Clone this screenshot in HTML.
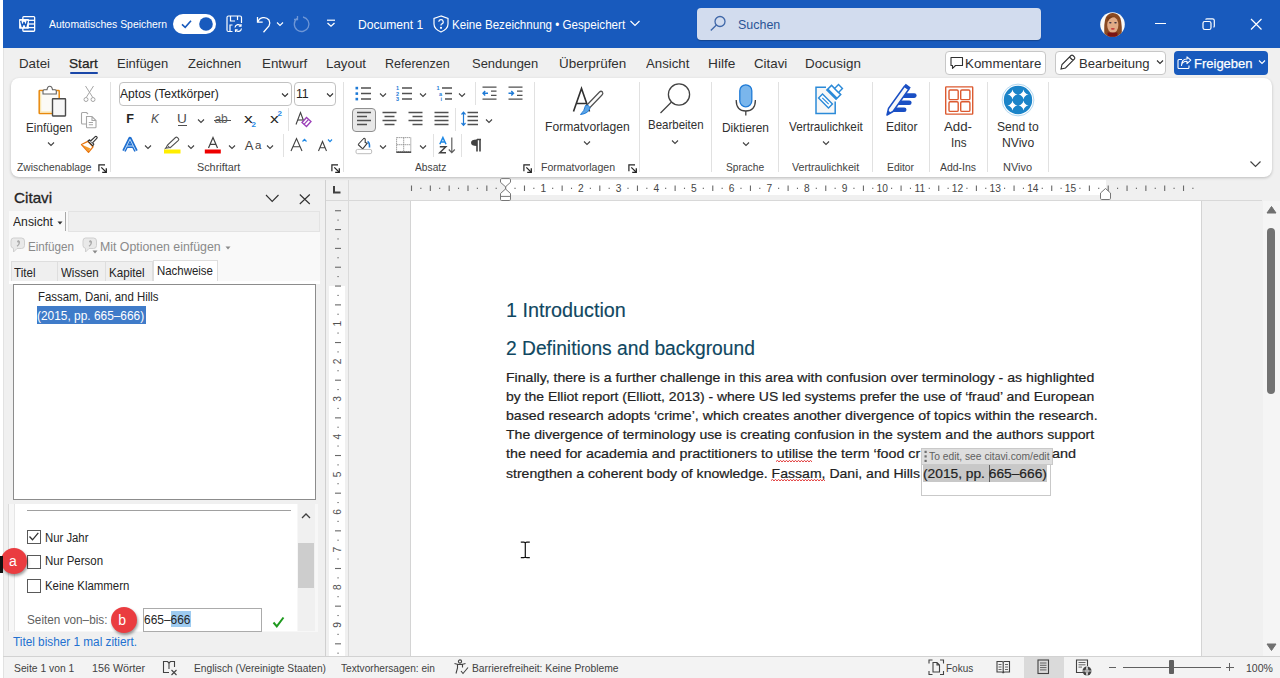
<!DOCTYPE html>
<html><head><meta charset="utf-8">
<style>
*{box-sizing:border-box;margin:0;padding:0}
html,body{width:1280px;height:678px;overflow:hidden;background:#f0f0f0;font-family:"Liberation Sans",sans-serif;color:#242424;position:relative}
.a{position:absolute;white-space:nowrap}
.t{position:absolute;white-space:nowrap;line-height:1}
svg{position:absolute;overflow:visible}
</style></head><body>

<div class="a" style="left:0;top:0;width:3px;height:678px;background:#fff"></div>
<div class="a" style="left:3px;top:48px;width:1px;height:630px;background:#e2e2e2"></div>
<div class="a" style="left:3px;top:0;width:1277px;height:48px;background:#185abd"></div>
<div class="a" style="left:11px;top:78px;width:1261px;height:99px;background:#fff;border-radius:8px;box-shadow:0 1px 3px rgba(0,0,0,.22)"></div>
<svg style="left:19px;top:16px" width="17" height="17" viewBox="0 0 17 17" fill="none" stroke="#fff" stroke-width="1.3">
<rect x="3.85" y="0.55" width="11.8" height="14.7" rx="0.9"/>
<line x1="8" y1="4.3" x2="15.6" y2="4.3"/><line x1="8" y1="8" x2="15.6" y2="8"/><line x1="8" y1="11.6" x2="15.6" y2="11.6"/>
<rect x="0.1" y="2.9" width="9.8" height="9.8" rx="0.7" fill="#fff" stroke="none"/>
<path d="M1.7 4.8 L3.2 10.6 L5 6.3 L6.8 10.6 L8.3 4.8" stroke="#185abd" stroke-width="1.4" stroke-linejoin="round"/>
</svg>
<div class="a" style="left:173px;top:14px;width:43px;height:20px;border-radius:10px;background:#fff"></div>
<svg style="left:173px;top:14px" width="43" height="20"><path d="M9 10.3 L12.2 13.3 L18 6.8" stroke="#185abd" stroke-width="1.6" fill="none"/><circle cx="33" cy="10" r="6.8" fill="#185abd"/></svg>
<svg style="left:226px;top:15px" width="18" height="18" viewBox="0 0 18 18" fill="none" stroke="#fff" stroke-width="1.2">
<path d="M6.5 16.5 H2.5 Q1 16.5 1 15 V2.5 Q1 1 2.5 1 H14 Q15.5 1 15.5 2.5 V8"/><path d="M4.5 1 V6 H9"/><path d="M11.5 1 V5"/><path d="M4 16.5 V10 H6.5"/>
<path d="M9 12.5 A3.3 3.3 0 0 1 15 11"/><path d="M15.5 13.5 A3.3 3.3 0 0 1 9.5 15"/><path d="M15 9 V11.2 H12.8"/><path d="M9.5 17 V14.8 H11.7"/>
</svg>
<svg style="left:255px;top:15px" width="20" height="18" viewBox="0 0 20 18" fill="none" stroke="#fff" stroke-width="1.3">
<path d="M2.5 2 V7.2 H7.7"/><path d="M2.8 7 A6.5 6.5 0 0 1 14 5 A6.5 6.5 0 0 1 14 11 L8.5 17.2"/></svg>
<svg style="left:276px;top:21px" width="8" height="6"><path d="M1 1.5 L4 4.5 L7 1.5" stroke="#fff" stroke-width="1.1" fill="none"/></svg>
<svg style="left:292px;top:15px" width="20" height="18" viewBox="0 0 20 18" fill="none" stroke="#6e96d6" stroke-width="1.3">
<path d="M11 2 A7.3 7.3 0 1 1 5 3.5"/><path d="M5.5 1 V4.5 H2"/></svg>
<svg style="left:326px;top:19px" width="10" height="9"><path d="M1 1.2 H9" stroke="#fff" stroke-width="1.2"/><path d="M1.5 4 L5 7.2 L8.5 4" stroke="#fff" stroke-width="1.3" fill="none"/></svg>
<svg style="left:432px;top:15px" width="18" height="18" viewBox="0 0 18 18" fill="none" stroke="#fff" stroke-width="1.2">
<path d="M9 1 L2 3.5 V9 Q2 14 9 17 Q16 14 16 9 V3.5 Z"/><path d="M6.8 6.8 A2.2 2.2 0 1 1 9.5 9 Q9 9.3 9 10.5"/><circle cx="9" cy="12.8" r="0.5" fill="#fff"/></svg>
<svg style="left:629px;top:19px" width="12" height="9"><path d="M1.5 2 L6 6.5 L10.5 2" stroke="#fff" stroke-width="1.2" fill="none"/></svg>
<div class="a" style="left:697px;top:8px;width:344px;height:32px;border-radius:4px;background:#d2dcee;box-shadow:0 1px 1px rgba(0,0,0,.25)"></div>
<svg style="left:709px;top:15px" width="18" height="18" viewBox="0 0 18 18" fill="none" stroke="#3f67a8" stroke-width="1.3"><circle cx="11" cy="6.5" r="5"/><path d="M7.4 10 L1.8 15.5"/></svg>
<svg style="left:1100px;top:11.5px" width="25" height="25"><defs><clipPath id="av"><circle cx="12.5" cy="12.5" r="12.3"/></clipPath></defs>
<g clip-path="url(#av)"><rect width="25" height="25" fill="#fbfaf6"/>
<path d="M4.5 25 Q3.5 10 6 5 Q9 0.8 13 1 Q18.5 1.2 20.5 6.5 Q22.5 14 21.5 25 Z" fill="#8a4a22"/>
<ellipse cx="12.8" cy="13" rx="5.6" ry="8" fill="#e2ab86"/>
<path d="M7 5 Q12 3 18.5 6 Q15 4.5 12 5.5 Q9 6.5 7.5 10 Z" fill="#7a3e1a"/>
<ellipse cx="10.3" cy="10.8" rx="1.3" ry="0.8" fill="#3a3040"/><ellipse cx="15.5" cy="10.8" rx="1.3" ry="0.8" fill="#3a3040"/>
<ellipse cx="12.8" cy="16.8" rx="2" ry="0.9" fill="#c83a3a"/>
<rect x="7.5" y="20.5" width="10" height="5" fill="#7a1414"/></g></svg>
<div class="a" style="left:1155px;top:23px;width:11px;height:1.3px;background:#fff"></div>
<svg style="left:1202px;top:18px" width="14" height="12" fill="none" stroke="#fff" stroke-width="1.2"><rect x="1" y="3.5" width="8" height="8" rx="1.8"/><path d="M3.5 1.5 Q4 0.8 5 0.8 H10.5 Q12.3 0.8 12.3 2.5 V8 Q12.3 9 11.5 9.3"/></svg>
<svg style="left:1250px;top:18px" width="13" height="13"><path d="M1 1 L11.5 11.5 M11.5 1 L1 11.5" stroke="#fff" stroke-width="1.2"/></svg>
<div class="a" style="left:70px;top:72.4px;width:28px;height:2px;border-radius:1px;background:#1a47a8"></div>
<div class="a" style="left:945px;top:50.5px;width:101px;height:24px;border:1px solid #c7c7c7;border-radius:4px;background:#fff"></div>
<svg style="left:950px;top:56px" width="14" height="14" fill="none" stroke="#303030" stroke-width="1.1"><path d="M1 1.5 H12.5 V9.5 H5.5 L2.5 12.3 V9.5 H1 Z" stroke-linejoin="round"/></svg>
<div class="a" style="left:1054.5px;top:50.5px;width:111px;height:24px;border:1px solid #c7c7c7;border-radius:4px;background:#fff"></div>
<svg style="left:1059px;top:54px" width="17" height="17" fill="none" stroke="#303030" stroke-width="1.1"><path d="M2 15 L3 10.5 L12 1.5 Q13 0.8 14 1.5 L15.5 3 Q16.2 4 15.5 5 L6.5 14 Z M10.5 3 L14 6.5"/></svg>
<svg style="left:1156px;top:59px" width="8" height="6"><path d="M1 1.5 L4 4.5 L7 1.5" stroke="#303030" stroke-width="1.1" fill="none"/></svg>
<div class="a" style="left:1174px;top:50.5px;width:94px;height:24px;border-radius:4px;background:#185abd"></div>
<svg style="left:1177px;top:56px" width="16" height="14" fill="none" stroke="#fff" stroke-width="1.1"><path d="M5 3.5 H2 Q1 3.5 1 4.5 V11.5 Q1 12.5 2 12.5 H11 Q12 12.5 12 11.5 V9.5" stroke-linejoin="round"/><path d="M4.5 9.5 Q5 5.3 10 5.3 V7.6 L13.8 4.2 L10 0.8 V3 Q4.5 3 4.5 9.5 Z" stroke-linejoin="round"/></svg>
<svg style="left:1258px;top:59px" width="8" height="6"><path d="M1 1.5 L4 4.5 L7 1.5" stroke="#fff" stroke-width="1.1" fill="none"/></svg>
<div class="a" style="left:110px;top:82px;width:1px;height:90px;background:#e1e1e1"></div>
<div class="a" style="left:343px;top:82px;width:1px;height:90px;background:#e1e1e1"></div>
<div class="a" style="left:534px;top:82px;width:1px;height:90px;background:#e1e1e1"></div>
<div class="a" style="left:639px;top:82px;width:1px;height:90px;background:#e1e1e1"></div>
<div class="a" style="left:711px;top:82px;width:1px;height:90px;background:#e1e1e1"></div>
<div class="a" style="left:778px;top:82px;width:1px;height:90px;background:#e1e1e1"></div>
<div class="a" style="left:872px;top:82px;width:1px;height:90px;background:#e1e1e1"></div>
<div class="a" style="left:929px;top:82px;width:1px;height:90px;background:#e1e1e1"></div>
<div class="a" style="left:987px;top:82px;width:1px;height:90px;background:#e1e1e1"></div>
<div class="a" style="left:1048px;top:82px;width:1px;height:90px;background:#e1e1e1"></div>
<svg style="left:37px;top:85px" width="32" height="33" fill="none">
<rect x="2.2" y="5.5" width="20" height="23" rx="0.6" fill="#fbfaf6" stroke="#e8890c" stroke-width="1.5"/><path d="M3.7 7 V27 H15" stroke="#fbe3a0" stroke-width="1"/>
<path d="M6 9 V6 Q6 4.8 7.3 4.8 H10 Q10.5 1.2 12.8 1.2 Q15 1.2 15.5 4.8 H18 Q19.3 4.8 19.3 6 V9 Z" fill="#fff" stroke="#616161" stroke-width="1.1"/>
<rect x="15.5" y="13.8" width="13" height="17.2" rx="0.4" fill="#f7f7f7" stroke="#4a4a4a" stroke-width="1.4"/>
</svg>
<svg style="left:47px;top:141px" width="8" height="6"><path d="M1 1.5 L4.0 4.5 L7 1.5" stroke="#424242" stroke-width="1.1" fill="none"/></svg>
<svg style="left:83px;top:85px" width="13" height="18" fill="none" stroke="#a6a6a6" stroke-width="1"><path d="M2.5 1 L9.5 12 M10.5 1 L3.5 12"/><circle cx="3" cy="14.5" r="2"/><circle cx="10" cy="14.5" r="2"/></svg>
<svg style="left:80px;top:111px" width="18" height="18" fill="none" stroke="#a6a6a6" stroke-width="1.1"><path d="M6 13 H2.5 Q1.5 13 1.5 12 V2.5 Q1.5 1.5 2.5 1.5 H6.5 L8 3"/><path d="M6.5 5.5 H12 L16 9.5 V16 Q16 16.8 15.2 16.8 H7.3 Q6.5 16.8 6.5 16 Z M12 5.5 V9.5 H16 M8.8 11.5 H13 M8.8 13.8 H13"/></svg>
<svg style="left:76px;top:130px" width="26" height="28" fill="none">
<path d="M5.5 14.5 L11.8 11.3 L17 16.8 L12.5 22.3 Z" fill="#fff" stroke="#e8740c" stroke-width="1.3" stroke-linejoin="round"/>
<path d="M6.5 15 L14.5 18.5 L12.3 21.5 Z" fill="#f59a2a"/>
<path d="M12 11 L13.6 9.8 L17.8 14.2 L16.8 15.8 Z" fill="#fff" stroke="#333" stroke-width="1.1" stroke-linejoin="round"/>
<path d="M14.6 11 L19 6.8 Q20 6 20.8 6.8 Q21.6 7.6 20.8 8.4 L16.5 12.8" fill="#fff" stroke="#333" stroke-width="1.1"/>
</svg>
<svg style="left:98px;top:164px" width="10" height="10" fill="none" stroke="#242424" stroke-width="1.2"><path d="M0.9 7.2 V0.9 H7"/><path d="M3.3 3.3 L8 8"/><path d="M4.2 8.3 H8.3 V4.2" stroke-width="1.3"/></svg>
<div class="a" style="left:118.5px;top:82px;width:173px;height:24px;border:1px solid #c2c2c2;border-radius:4px;background:#fff"></div>
<svg style="left:281px;top:92px" width="8" height="6"><path d="M1 1.5 L4.0 4.5 L7 1.5" stroke="#303030" stroke-width="1.1" fill="none"/></svg>
<div class="a" style="left:293.5px;top:82px;width:42px;height:24px;border:1px solid #c2c2c2;border-radius:4px;background:#fff"></div>
<svg style="left:326px;top:92px" width="8" height="6"><path d="M1 1.5 L4.0 4.5 L7 1.5" stroke="#303030" stroke-width="1.1" fill="none"/></svg>
<div class="a" style="left:177.5px;top:124.6px;width:9px;height:1.2px;background:#505050"></div>
<svg style="left:197px;top:117.5px" width="8" height="6"><path d="M1 1.5 L4.0 4.5 L7 1.5" stroke="#424242" stroke-width="1.1" fill="none"/></svg>
<div class="a" style="left:214px;top:120.2px;width:17px;height:1.2px;background:#505050"></div>
<div class="a" style="left:288px;top:108px;width:1px;height:23px;background:#e1e1e1"></div>
<svg style="left:295px;top:111px" width="18" height="17" fill="none"><path d="M1 13.5 L5.5 1.5 L9.8 13" stroke="#424242" stroke-width="1.1"/><path d="M2.8 9 H8" stroke="#424242" stroke-width="1.1"/>
<path d="M7 11.5 L11.5 6.5 L16 10.5 L11.5 15.5 Z" fill="#fff" stroke="#9b3fb8" stroke-width="1.3"/><path d="M9 13.3 L13.5 8.5" stroke="#9b3fb8" stroke-width="1.1"/></svg>
<svg style="left:122px;top:137px" width="17" height="16"><path d="M2 14 L8 1.8 L14 14 M4.8 9 H11.2" fill="none" stroke="#1f6fd0" stroke-width="3.8" stroke-linejoin="round"/><path d="M2.3 13.8 L8 2.3 L13.7 13.8 M5 9 H11" fill="none" stroke="#bcd9f7" stroke-width="1"/></svg>
<svg style="left:143.5px;top:144px" width="8" height="6"><path d="M1 1.5 L4.0 4.5 L7 1.5" stroke="#424242" stroke-width="1.1" fill="none"/></svg>
<svg style="left:163px;top:136px" width="19" height="18" fill="none"><path d="M3 12 L4.5 9 L12.5 1.5 Q13.5 0.8 14.5 1.6 L15.4 2.5 Q16.2 3.5 15.4 4.3 L7.5 11.5 Z" stroke="#505050" stroke-width="1.1" fill="#fff"/><path d="M4.3 9.3 L7.2 11.9" stroke="#505050" stroke-width="1"/><path d="M1.5 13 L3.5 11.5" stroke="#505050" stroke-width="1"/>
<rect x="1" y="13.5" width="16.5" height="4" fill="#ffee00"/></svg>
<svg style="left:187px;top:144px" width="8" height="6"><path d="M1 1.5 L4.0 4.5 L7 1.5" stroke="#424242" stroke-width="1.1" fill="none"/></svg>
<svg style="left:204px;top:136px" width="18" height="18" fill="none"><path d="M4.5 12 L9 1.5 L13.5 12 M6.2 8.3 H11.8" stroke="#424242" stroke-width="1.2"/><rect x="0.8" y="13.5" width="16" height="4" fill="#ee0000"/></svg>
<svg style="left:228px;top:144px" width="8" height="6"><path d="M1 1.5 L4.0 4.5 L7 1.5" stroke="#424242" stroke-width="1.1" fill="none"/></svg>
<svg style="left:266px;top:144px" width="8" height="6"><path d="M1 1.5 L4.0 4.5 L7 1.5" stroke="#424242" stroke-width="1.1" fill="none"/></svg>
<div class="a" style="left:283px;top:134px;width:1px;height:23px;background:#e1e1e1"></div>
<svg style="left:290px;top:137px" width="18" height="15" fill="none"><path d="M1 14 L6.5 1.5 L12 14 M3 9.8 H10" stroke="#424242" stroke-width="1.1"/><path d="M12.5 4.5 L14.5 2.3 L16.5 4.5" stroke="#1e88e5" stroke-width="1.2"/></svg>
<svg style="left:317px;top:137px" width="18" height="15" fill="none"><path d="M1.5 14 L5.5 4.5 L9.5 14 M3 10.8 H8" stroke="#424242" stroke-width="1.1"/><path d="M11 2.5 L13 4.7 L15 2.5" stroke="#1e88e5" stroke-width="1.2"/></svg>
<svg style="left:331px;top:164px" width="10" height="10" fill="none" stroke="#242424" stroke-width="1.2"><path d="M0.9 7.2 V0.9 H7"/><path d="M3.3 3.3 L8 8"/><path d="M4.2 8.3 H8.3 V4.2" stroke-width="1.3"/></svg>
<svg style="left:355px;top:86px" width="17" height="16" fill="none" stroke="#505050" stroke-width="1.3"><rect x="0.5" y="0.8" width="2.6" height="2.6" fill="#1e7ad6" stroke="none"/><rect x="0.5" y="6.3" width="2.6" height="2.6" fill="#1e7ad6" stroke="none"/><rect x="0.5" y="11.8" width="2.6" height="2.6" fill="#1e7ad6" stroke="none"/><path d="M6 2 H16 M6 7.5 H16 M6 13 H16"/></svg>
<svg style="left:379px;top:92px" width="8" height="6"><path d="M1 1.5 L4.0 4.5 L7 1.5" stroke="#424242" stroke-width="1.1" fill="none"/></svg>
<svg style="left:396px;top:85px" width="17" height="17" fill="none" stroke="#505050" stroke-width="1.3"><path d="M6 3 H16 M6 8.5 H16 M6 14 H16"/><text x="0" y="5" font-size="5.5" fill="#1e7ad6" stroke="none" font-family="Liberation Sans" font-weight="bold">1</text><text x="0" y="10.5" font-size="5.5" fill="#1e7ad6" stroke="none" font-family="Liberation Sans" font-weight="bold">2</text><text x="0" y="16" font-size="5.5" fill="#1e7ad6" stroke="none" font-family="Liberation Sans" font-weight="bold">3</text></svg>
<svg style="left:419px;top:92px" width="8" height="6"><path d="M1 1.5 L4.0 4.5 L7 1.5" stroke="#424242" stroke-width="1.1" fill="none"/></svg>
<svg style="left:436px;top:85px" width="17" height="17" fill="none" stroke="#505050" stroke-width="1.3"><path d="M6 3 H16 M9 8.5 H16 M9 14 H16"/><text x="0.5" y="5" font-size="5.5" fill="#1e7ad6" stroke="none" font-family="Liberation Sans" font-weight="bold">1</text><text x="3" y="10.5" font-size="5.5" fill="#1e7ad6" stroke="none" font-family="Liberation Sans" font-weight="bold">a</text><text x="4.5" y="16" font-size="5.5" fill="#1e7ad6" stroke="none" font-family="Liberation Sans" font-weight="bold">i</text></svg>
<svg style="left:458px;top:92px" width="8" height="6"><path d="M1 1.5 L4.0 4.5 L7 1.5" stroke="#424242" stroke-width="1.1" fill="none"/></svg>
<div class="a" style="left:475px;top:82px;width:1px;height:23px;background:#e1e1e1"></div>
<svg style="left:482px;top:86px" width="15" height="15" fill="none" stroke="#505050" stroke-width="1.3"><path d="M0.5 1.2 H14.5 M9 5.2 H14.5 M9 9.4 H14.5 M0.5 13.2 H14.5"/><path d="M6 7.3 H1 M3.2 5 L1 7.3 L3.2 9.6" stroke="#1e7ad6" stroke-width="1.4"/></svg>
<svg style="left:508px;top:86px" width="15" height="15" fill="none" stroke="#505050" stroke-width="1.3"><path d="M0.5 1.2 H14.5 M9 5.2 H14.5 M9 9.4 H14.5 M0.5 13.2 H14.5"/><path d="M0.5 7.3 H5.5 M3.3 5 L5.5 7.3 L3.3 9.6" stroke="#1e7ad6" stroke-width="1.4"/></svg>
<div class="a" style="left:351.5px;top:107.5px;width:24px;height:24px;border:1px solid #8f8f8f;border-radius:4px;background:#e8e8e8"></div>
<svg style="left:357px;top:111px" width="15" height="16" fill="none" stroke="#505050" stroke-width="1.3"><path d="M0 1.5 H14 M0 5.5 H10 M0 9.5 H14 M0 13.5 H10"/></svg>
<svg style="left:382px;top:111px" width="15" height="16" fill="none" stroke="#505050" stroke-width="1.3"><path d="M0.5 1.5 H14.5 M2.5 5.5 H12.5 M0.5 9.5 H14.5 M2.5 13.5 H12.5"/></svg>
<svg style="left:408px;top:111px" width="15" height="16" fill="none" stroke="#505050" stroke-width="1.3"><path d="M0.5 1.5 H14.5 M4.5 5.5 H14.5 M0.5 9.5 H14.5 M4.5 13.5 H14.5"/></svg>
<svg style="left:434px;top:111px" width="15" height="16" fill="none" stroke="#505050" stroke-width="1.3"><path d="M0.5 1.5 H14.5 M0.5 5.5 H14.5 M0.5 9.5 H14.5 M0.5 13.5 H14.5"/></svg>
<div class="a" style="left:455px;top:108px;width:1px;height:23px;background:#e1e1e1"></div>
<svg style="left:461px;top:111px" width="18" height="16" fill="none" stroke="#505050" stroke-width="1.3"><path d="M6.5 1.5 H17 M6.5 5.5 H17 M6.5 9.5 H17 M6.5 13.5 H17"/><path d="M2.5 1.5 V14 M0.5 3.5 L2.5 1.2 L4.5 3.5 M0.5 12 L2.5 14.3 L4.5 12" stroke="#1e7ad6" stroke-width="1.2"/></svg>
<svg style="left:485px;top:118px" width="8" height="6"><path d="M1 1.5 L4.0 4.5 L7 1.5" stroke="#424242" stroke-width="1.1" fill="none"/></svg>
<svg style="left:350px;top:132px" width="25" height="25" fill="none"><path d="M8.1 12.5 L13.2 7 Q14.2 5.5 15.2 7 V11 M15.2 10.5 L17.3 11.2 L12.7 16.9 L8.1 12.5" stroke="#3a3a3a" stroke-width="1.1" stroke-linejoin="round"/><path d="M17.5 9.5 Q19.8 10.5 19.5 15.5" stroke="#1e7ad6" stroke-width="1.6"/><rect x="6" y="17.4" width="15.7" height="4.3" rx="1.6" fill="#fff" stroke="#b5b5b5" stroke-width="0.9"/></svg>
<svg style="left:379px;top:144px" width="8" height="6"><path d="M1 1.5 L4.0 4.5 L7 1.5" stroke="#424242" stroke-width="1.1" fill="none"/></svg>
<svg style="left:396px;top:137px" width="16" height="17" fill="none"><rect x="0.6" y="0.6" width="14.2" height="14.2" stroke="#8a8a8a" stroke-width="1" stroke-dasharray="1.2 0.8"/><path d="M7.7 0.6 V14.8 M0.6 7.7 H14.8" stroke="#8a8a8a" stroke-width="1" stroke-dasharray="1.2 0.8"/><path d="M0.3 15.2 H15.2" stroke="#505050" stroke-width="1.6"/></svg>
<svg style="left:419px;top:144px" width="8" height="6"><path d="M1 1.5 L4.0 4.5 L7 1.5" stroke="#424242" stroke-width="1.1" fill="none"/></svg>
<div class="a" style="left:433px;top:134px;width:1px;height:23px;background:#e1e1e1"></div>
<svg style="left:439px;top:137px" width="18" height="17" fill="none"><path d="M0.8 7.3 L3.9 0.6 L7 7.3 M2 5 H5.8" stroke="#1e88e5" stroke-width="1.5"/><path d="M0.8 9.8 H6.8 L0.8 15.8 H7" stroke="#424242" stroke-width="1.5"/><path d="M12.8 0.5 V15.5 M9.8 12.5 L12.8 15.6 L15.8 12.5" stroke="#606060" stroke-width="1.2"/></svg>
<div class="a" style="left:461px;top:134px;width:1px;height:23px;background:#e1e1e1"></div>
<svg style="left:470px;top:139px" width="12" height="13"><path d="M7 0.5 H11 M7 0.5 V12.5 M10 0.5 V12.5" stroke="#424242" stroke-width="1.6" fill="none"/><path d="M7 0.5 Q1 0.5 1 3.7 Q1 6.9 7 6.9 Z" fill="#424242"/></svg>
<svg style="left:523px;top:164px" width="10" height="10" fill="none" stroke="#242424" stroke-width="1.2"><path d="M0.9 7.2 V0.9 H7"/><path d="M3.3 3.3 L8 8"/><path d="M4.2 8.3 H8.3 V4.2" stroke-width="1.3"/></svg>
<svg style="left:572px;top:87px" width="34" height="31" fill="none"><path d="M1.5 24.5 L9.5 1.5 L17.5 24.5 M4.5 16.5 H14.5" stroke="#303030" stroke-width="1.6"/>
<path d="M14 19 L27.5 5 Q29 3.5 30.5 5 Q31.5 6.5 30 8 L17.5 21" fill="#fff" stroke="#505050" stroke-width="1.2"/>
<path d="M13.5 18.5 Q17 17.5 18 21 Q16.5 26.5 8.5 27.5 Q12.5 24 13.5 18.5 Z" fill="#5ba4e6" stroke="#1e7ad6" stroke-width="1"/></svg>
<svg style="left:582.5px;top:140px" width="8" height="6"><path d="M1 1.5 L4.0 4.5 L7 1.5" stroke="#424242" stroke-width="1.1" fill="none"/></svg>
<svg style="left:627.5px;top:164px" width="10" height="10" fill="none" stroke="#242424" stroke-width="1.2"><path d="M0.9 7.2 V0.9 H7"/><path d="M3.3 3.3 L8 8"/><path d="M4.2 8.3 H8.3 V4.2" stroke-width="1.3"/></svg>
<svg style="left:659px;top:83px" width="33" height="32" fill="none" stroke="#424242" stroke-width="1.3"><circle cx="20" cy="11.5" r="10.6"/><path d="M12.5 19 L1.5 30"/></svg>
<svg style="left:671px;top:138.5px" width="8" height="6"><path d="M1 1.5 L4.0 4.5 L7 1.5" stroke="#424242" stroke-width="1.1" fill="none"/></svg>
<svg style="left:735px;top:84px" width="22" height="33" fill="none"><rect x="4.8" y="0.8" width="12" height="22" rx="6" fill="#7ab6ec" stroke="#1e7ad6" stroke-width="1.3"/><path d="M1.2 16 Q1.2 27 10.8 27 Q20.4 27 20.4 16" stroke="#424242" stroke-width="1.3"/><path d="M10.8 27 V31.5" stroke="#424242" stroke-width="1.3"/></svg>
<svg style="left:741.5px;top:141px" width="8" height="6"><path d="M1 1.5 L4.0 4.5 L7 1.5" stroke="#424242" stroke-width="1.1" fill="none"/></svg>
<svg style="left:810px;top:80px" width="36" height="38" fill="none" stroke="#2b8ad8">
<path d="M16 7.2 H6 V33.5 H25.2 V21.5" fill="#f7f7f7" stroke-width="1.5"/>
<rect x="-7" y="-2.8" width="14" height="5.6" transform="translate(15.5 21) rotate(45)" fill="#fff" stroke-width="1.4"/>
<path d="M-4.5 0 H4.5" transform="translate(15.5 21) rotate(45)" stroke-width="1.2"/>
<rect x="-6.5" y="-3.3" width="13" height="6.6" transform="translate(23.8 12.3) rotate(45)" fill="#fff" stroke-width="1.5"/>
<path d="M-6.5 2.3 H6.5" transform="translate(23.8 12.3) rotate(45)" stroke-width="2"/>
<rect x="-2.8" y="-2.8" width="5.6" height="5.6" transform="translate(28.5 8.5) rotate(45)" fill="#fff" stroke-width="1.4"/>
</svg>
<svg style="left:821.5px;top:140px" width="8" height="6"><path d="M1 1.5 L4.0 4.5 L7 1.5" stroke="#424242" stroke-width="1.1" fill="none"/></svg>
<svg style="left:880px;top:80px" width="40" height="40">
<path d="M26 13.3 H34.3 Q36.6 13.3 36.6 15.6 Q36.6 17.9 34.3 17.9 H22 Z" fill="#1a4fc4"/>
<path d="M21 20.4 H29.3 Q31.6 20.4 31.6 22.7 Q31.6 25 29.3 25 H17 Z" fill="#1a4fc4"/>
<path d="M16 27.4 H24.2 Q26.5 27.4 26.5 29.7 Q26.5 32 24.2 32 H12 Z" fill="#1a4fc4"/>
<path d="M7 35 L8.5 28.5 L24.5 6.3 L28.8 9.3 L13 31.5 Z" fill="#f8f8f8" stroke="#1a4fc4" stroke-width="1.5" stroke-linejoin="round"/>
<path d="M24.8 5 L29.8 8.7" stroke="#1a4fc4" stroke-width="3.2"/>
<path d="M7 35 L8.2 30.5 L11 32.8 Z" fill="#1a4fc4"/>
</svg>
<svg style="left:944px;top:85px" width="30" height="31" fill="none" stroke="#dc5a30" stroke-width="1.4"><rect x="1.7" y="1.9" width="27" height="27.2" rx="0.5"/><rect x="5" y="5" width="9.2" height="9.6" rx="1.2"/><rect x="16.7" y="5" width="9.2" height="9.6" rx="1.2"/><rect x="5" y="16.8" width="9.2" height="9.6" rx="1.2"/><rect x="16.7" y="16.8" width="9.2" height="9.6" rx="1.2"/></svg>
<svg style="left:1001px;top:83px" width="34" height="34"><circle cx="17" cy="17" r="15.9" fill="none" stroke="#a9d2ee" stroke-width="0.9"/><circle cx="17" cy="17" r="14.2" fill="#1b84c8"/>
<path d="M11.5 6.5 Q12.3 10.7 16.5 11.5 Q12.3 12.3 11.5 16.5 Q10.7 12.3 6.5 11.5 Q10.7 10.7 11.5 6.5 Z" fill="#fff"/><path d="M22.5 6.5 Q23.3 10.7 27.5 11.5 Q23.3 12.3 22.5 16.5 Q21.7 12.3 17.5 11.5 Q21.7 10.7 22.5 6.5 Z" fill="#fff"/><path d="M11.5 17.5 Q12.3 21.7 16.5 22.5 Q12.3 23.3 11.5 27.5 Q10.7 23.3 6.5 22.5 Q10.7 21.7 11.5 17.5 Z" fill="#fff"/><path d="M22.5 17.5 Q23.3 21.7 27.5 22.5 Q23.3 23.3 22.5 27.5 Q21.7 23.3 17.5 22.5 Q21.7 21.7 22.5 17.5 Z" fill="#fff"/></svg>
<svg style="left:1249px;top:160px" width="14" height="9"><path d="M1.5 1.5 L6.5 6.5 L11.5 1.5" stroke="#424242" stroke-width="1.2" fill="none"/></svg>
<div class="a" style="left:325px;top:180px;width:1px;height:476px;background:#d0d0d0"></div>
<svg style="left:265px;top:194px" width="15" height="9"><path d="M1 1 L7.2 7.5 L13.5 1" stroke="#303030" stroke-width="1.1" fill="none"/></svg>
<svg style="left:299px;top:194px" width="12" height="11"><path d="M0.8 0.5 L10.8 10 M10.8 0.5 L0.8 10" stroke="#303030" stroke-width="1.1" fill="none"/></svg>
<div class="a" style="left:9px;top:210.5px;width:311px;height:73px;background:#f9f9f9"></div>
<div class="a" style="left:9px;top:281px;width:311px;height:3px;background:#fff"></div>
<div class="a" style="left:64.8px;top:212px;width:1px;height:19px;background:#a8a8a8"></div>
<div class="a" style="left:68px;top:211px;width:252px;height:21px;background:#efefef;border:1px solid #e3e3e3"></div>
<svg style="left:57px;top:221px" width="6" height="4"><path d="M0.5 0.5 H5.5 L3 3.5 Z" fill="#303030"/></svg>
<svg style="left:9.5px;top:237px" width="16" height="17" fill="none"><path d="M3.5 1 H11.5 Q14.5 1 14.5 4 V8.5 Q14.5 11.5 11.5 11.5 H7 L3.5 15 V11.3 Q1 10.8 1 8.5 V4 Q1 1 3.5 1 Z" fill="#e9e9e9" stroke="#cfcfcf" stroke-width="1"/><path d="M7.8 3.8 Q9.6 4 9.3 6 Q9 8 7 9.2" stroke="#a8a8a8" stroke-width="1.3"/><circle cx="8.2" cy="4.6" r="1.1" fill="#a8a8a8"/></svg>
<svg style="left:82px;top:237px" width="16" height="17" fill="none"><path d="M3.5 1 H11.5 Q14.5 1 14.5 4 V8.5 Q14.5 11.5 11.5 11.5 H7 L3.5 15 V11.3 Q1 10.8 1 8.5 V4 Q1 1 3.5 1 Z" fill="#e9e9e9" stroke="#cfcfcf" stroke-width="1"/><path d="M7.8 3.8 Q9.6 4 9.3 6 Q9 8 7 9.2" stroke="#a8a8a8" stroke-width="1.3"/><circle cx="8.2" cy="4.6" r="1.1" fill="#a8a8a8"/><path d="M10.5 13.5 H15.5 L13 16.5 Z" fill="#8a8a8a"/></svg>
<svg style="left:225px;top:246px" width="6" height="4"><path d="M0.5 0.5 H5.5 L3 3.5 Z" fill="#8a8a8a"/></svg>
<div class="a" style="left:10.5px;top:261px;width:142px;height:20px;background:#efefef;border:1px solid #dedede;border-bottom:none"></div>
<div class="a" style="left:57px;top:261px;width:1px;height:20px;background:#dedede"></div>
<div class="a" style="left:105px;top:261px;width:1px;height:20px;background:#dedede"></div>
<div class="a" style="left:152.5px;top:260px;width:65px;height:21px;background:#fff;border:1px solid #dedede;border-bottom:none"></div>
<div class="a" style="left:13px;top:284px;width:303px;height:216px;background:#fff;border:1px solid #8c8c8c"></div>
<div class="a" style="left:36.5px;top:305.8px;width:109.7px;height:18.5px;background:#3f7bc9"></div>
<div class="a" style="left:9px;top:503.5px;width:309px;height:128px;background:#f7f7f7"></div>
<div class="a" style="left:14px;top:504px;width:283px;height:127px;background:#fff"></div>
<div class="a" style="left:8px;top:503.5px;width:1px;height:127.5px;background:#dcdcdc"></div>
<div class="a" style="left:14px;top:504px;width:1px;height:127px;background:#e6e6e6"></div>
<div class="a" style="left:26.5px;top:509.8px;width:264.5px;height:1.2px;background:#a0a0a0"></div>
<div class="a" style="left:297.5px;top:504px;width:17px;height:127px;background:#f0f0f0"></div>
<svg style="left:301px;top:512px" width="10" height="7"><path d="M1 6 L5 2 L9 6" stroke="#404040" stroke-width="1.3" fill="none"/></svg>
<div class="a" style="left:298px;top:543px;width:15.7px;height:45px;background:#cdcdcd"></div>
<div class="a" style="left:26.5px;top:529.5px;width:14px;height:14px;border:1px solid #595959;background:#fff"></div>
<div class="a" style="left:26.5px;top:554.5px;width:14px;height:14px;border:1px solid #595959;background:#fff"></div>
<div class="a" style="left:26.5px;top:579px;width:14px;height:14px;border:1px solid #595959;background:#fff"></div>
<svg style="left:28px;top:531px" width="12" height="11"><path d="M1.5 5.5 L4.5 8.8 L10.3 1.8" stroke="#303030" stroke-width="1.3" fill="none"/></svg>
<div class="a" style="left:143.4px;top:608px;width:118.6px;height:23.5px;background:#fff;border:1px solid #ababab"></div>
<div class="a" style="left:170.9px;top:610.6px;width:19.7px;height:16px;background:#9ecbf0"></div>
<svg style="left:272px;top:616px" width="13" height="12"><path d="M1.5 6.5 L4.8 10.3 L11.5 1.5" stroke="#1e9a1e" stroke-width="2" fill="none"/></svg>
<div class="a" style="left:0.9000000000000004px;top:547.7px;width:26px;height:26px;border-radius:50%;background:#ea3c40;box-shadow:1px 2px 3px rgba(0,0,0,.4)"></div>
<div class="a" style="left:110.5px;top:606.8px;width:26px;height:26px;border-radius:50%;background:#ea3c40;box-shadow:1px 2px 3px rgba(0,0,0,.4)"></div>
<div class="a" style="left:0px;top:556px;width:2.5px;height:17px;background:#111"></div>
<div class="a" style="left:326px;top:200px;width:936px;height:1px;background:#d8d8d8"></div>
<div class="a" style="left:348px;top:180px;width:1px;height:476px;background:#dadada"></div>
<svg style="left:333px;top:186px" width="8" height="8"><path d="M1 0 V6.5 H7.5" stroke="#404040" stroke-width="2" fill="none"/></svg>
<div class="a" style="left:505.6px;top:180px;width:600px;height:15px;background:#fff"></div>
<svg style="left:0;top:0" width="1280" height="678"><rect x="410.95" y="185.5" width="1.1" height="5.5" fill="#6a6a6a"/><rect x="420.31" y="187.7" width="1.1" height="1.3" fill="#6a6a6a"/><rect x="429.78" y="185.5" width="1.1" height="5.5" fill="#6a6a6a"/><rect x="439.15" y="187.7" width="1.1" height="1.3" fill="#6a6a6a"/><rect x="448.61" y="185.5" width="1.1" height="5.5" fill="#6a6a6a"/><rect x="457.98" y="187.7" width="1.1" height="1.3" fill="#6a6a6a"/><rect x="467.44" y="185.5" width="1.1" height="5.5" fill="#6a6a6a"/><rect x="476.81" y="187.7" width="1.1" height="1.3" fill="#6a6a6a"/><rect x="486.27" y="185.5" width="1.1" height="5.5" fill="#6a6a6a"/><rect x="495.63" y="187.7" width="1.1" height="1.3" fill="#6a6a6a"/><rect x="505.10" y="185.5" width="1.1" height="5.5" fill="#6a6a6a"/><rect x="514.47" y="187.7" width="1.1" height="1.3" fill="#6a6a6a"/><rect x="523.93" y="185.5" width="1.1" height="5.5" fill="#6a6a6a"/><rect x="533.30" y="187.7" width="1.1" height="1.3" fill="#6a6a6a"/><text x="543.26" y="192" font-size="10.2" fill="#454545" text-anchor="middle" font-family="Liberation Sans">1</text><rect x="552.13" y="187.7" width="1.1" height="1.3" fill="#6a6a6a"/><rect x="561.59" y="185.5" width="1.1" height="5.5" fill="#6a6a6a"/><rect x="570.96" y="187.7" width="1.1" height="1.3" fill="#6a6a6a"/><text x="580.92" y="192" font-size="10.2" fill="#454545" text-anchor="middle" font-family="Liberation Sans">2</text><rect x="589.79" y="187.7" width="1.1" height="1.3" fill="#6a6a6a"/><rect x="599.25" y="185.5" width="1.1" height="5.5" fill="#6a6a6a"/><rect x="608.62" y="187.7" width="1.1" height="1.3" fill="#6a6a6a"/><text x="618.58" y="192" font-size="10.2" fill="#454545" text-anchor="middle" font-family="Liberation Sans">3</text><rect x="627.45" y="187.7" width="1.1" height="1.3" fill="#6a6a6a"/><rect x="636.91" y="185.5" width="1.1" height="5.5" fill="#6a6a6a"/><rect x="646.28" y="187.7" width="1.1" height="1.3" fill="#6a6a6a"/><text x="656.24" y="192" font-size="10.2" fill="#454545" text-anchor="middle" font-family="Liberation Sans">4</text><rect x="665.11" y="187.7" width="1.1" height="1.3" fill="#6a6a6a"/><rect x="674.57" y="185.5" width="1.1" height="5.5" fill="#6a6a6a"/><rect x="683.94" y="187.7" width="1.1" height="1.3" fill="#6a6a6a"/><text x="693.90" y="192" font-size="10.2" fill="#454545" text-anchor="middle" font-family="Liberation Sans">5</text><rect x="702.77" y="187.7" width="1.1" height="1.3" fill="#6a6a6a"/><rect x="712.23" y="185.5" width="1.1" height="5.5" fill="#6a6a6a"/><rect x="721.60" y="187.7" width="1.1" height="1.3" fill="#6a6a6a"/><text x="731.56" y="192" font-size="10.2" fill="#454545" text-anchor="middle" font-family="Liberation Sans">6</text><rect x="740.43" y="187.7" width="1.1" height="1.3" fill="#6a6a6a"/><rect x="749.89" y="185.5" width="1.1" height="5.5" fill="#6a6a6a"/><rect x="759.26" y="187.7" width="1.1" height="1.3" fill="#6a6a6a"/><text x="769.22" y="192" font-size="10.2" fill="#454545" text-anchor="middle" font-family="Liberation Sans">7</text><rect x="778.09" y="187.7" width="1.1" height="1.3" fill="#6a6a6a"/><rect x="787.55" y="185.5" width="1.1" height="5.5" fill="#6a6a6a"/><rect x="796.91" y="187.7" width="1.1" height="1.3" fill="#6a6a6a"/><text x="806.88" y="192" font-size="10.2" fill="#454545" text-anchor="middle" font-family="Liberation Sans">8</text><rect x="815.75" y="187.7" width="1.1" height="1.3" fill="#6a6a6a"/><rect x="825.21" y="185.5" width="1.1" height="5.5" fill="#6a6a6a"/><rect x="834.58" y="187.7" width="1.1" height="1.3" fill="#6a6a6a"/><text x="844.54" y="192" font-size="10.2" fill="#454545" text-anchor="middle" font-family="Liberation Sans">9</text><rect x="853.40" y="187.7" width="1.1" height="1.3" fill="#6a6a6a"/><rect x="862.87" y="185.5" width="1.1" height="5.5" fill="#6a6a6a"/><rect x="872.24" y="187.7" width="1.1" height="1.3" fill="#6a6a6a"/><text x="882.20" y="192" font-size="10.2" fill="#454545" text-anchor="middle" font-family="Liberation Sans">10</text><rect x="891.07" y="187.7" width="1.1" height="1.3" fill="#6a6a6a"/><rect x="900.53" y="185.5" width="1.1" height="5.5" fill="#6a6a6a"/><rect x="909.89" y="187.7" width="1.1" height="1.3" fill="#6a6a6a"/><text x="919.86" y="192" font-size="10.2" fill="#454545" text-anchor="middle" font-family="Liberation Sans">11</text><rect x="928.73" y="187.7" width="1.1" height="1.3" fill="#6a6a6a"/><rect x="938.19" y="185.5" width="1.1" height="5.5" fill="#6a6a6a"/><rect x="947.56" y="187.7" width="1.1" height="1.3" fill="#6a6a6a"/><text x="957.52" y="192" font-size="10.2" fill="#454545" text-anchor="middle" font-family="Liberation Sans">12</text><rect x="966.38" y="187.7" width="1.1" height="1.3" fill="#6a6a6a"/><rect x="975.85" y="185.5" width="1.1" height="5.5" fill="#6a6a6a"/><rect x="985.22" y="187.7" width="1.1" height="1.3" fill="#6a6a6a"/><text x="995.18" y="192" font-size="10.2" fill="#454545" text-anchor="middle" font-family="Liberation Sans">13</text><rect x="1004.05" y="187.7" width="1.1" height="1.3" fill="#6a6a6a"/><rect x="1013.51" y="185.5" width="1.1" height="5.5" fill="#6a6a6a"/><rect x="1022.88" y="187.7" width="1.1" height="1.3" fill="#6a6a6a"/><text x="1032.84" y="192" font-size="10.2" fill="#454545" text-anchor="middle" font-family="Liberation Sans">14</text><rect x="1041.71" y="187.7" width="1.1" height="1.3" fill="#6a6a6a"/><rect x="1051.17" y="185.5" width="1.1" height="5.5" fill="#6a6a6a"/><rect x="1060.54" y="187.7" width="1.1" height="1.3" fill="#6a6a6a"/><text x="1070.50" y="192" font-size="10.2" fill="#454545" text-anchor="middle" font-family="Liberation Sans">15</text><rect x="1079.37" y="187.7" width="1.1" height="1.3" fill="#6a6a6a"/><rect x="1088.83" y="185.5" width="1.1" height="5.5" fill="#6a6a6a"/><rect x="1098.19" y="187.7" width="1.1" height="1.3" fill="#6a6a6a"/><rect x="1107.66" y="185.5" width="1.1" height="5.5" fill="#6a6a6a"/><rect x="1117.02" y="187.7" width="1.1" height="1.3" fill="#6a6a6a"/><rect x="1126.49" y="185.5" width="1.1" height="5.5" fill="#6a6a6a"/><rect x="1135.86" y="187.7" width="1.1" height="1.3" fill="#6a6a6a"/><rect x="1145.32" y="185.5" width="1.1" height="5.5" fill="#6a6a6a"/><rect x="1154.69" y="187.7" width="1.1" height="1.3" fill="#6a6a6a"/><rect x="1164.15" y="185.5" width="1.1" height="5.5" fill="#6a6a6a"/><rect x="1173.52" y="187.7" width="1.1" height="1.3" fill="#6a6a6a"/><rect x="1182.98" y="185.5" width="1.1" height="5.5" fill="#6a6a6a"/><rect x="1192.35" y="187.7" width="1.1" height="1.3" fill="#6a6a6a"/></svg>
<svg style="left:499px;top:177px" width="14" height="25" fill="#fff" stroke="#777" stroke-width="1">
<path d="M1.5 2.8 Q1.5 1.6 2.7 1.6 H10.3 Q11.5 1.6 11.5 2.8 V5.3 L6.5 9.8 L1.5 5.3 Z"/><path d="M6.5 12 L11.5 16.5 V22.3 Q11.5 23.5 10.3 23.5 H2.7 Q1.5 23.5 1.5 22.3 V16.5 Z"/><path d="M1.5 19.4 H11.5"/></svg>
<svg style="left:1099px;top:186px" width="14" height="15" fill="#fff" stroke="#777" stroke-width="1"><path d="M6.5 2.5 L11.5 7 V12.3 Q11.5 13.5 10.3 13.5 H2.7 Q1.5 13.5 1.5 12.3 V7 Z"/></svg>
<div class="a" style="left:329px;top:286px;width:16px;height:370px;background:#fff"></div>
<svg style="left:0;top:0" width="1280" height="678"><rect x="335" y="210.18" width="6" height="1.1" fill="#6a6a6a"/><rect x="337.4" y="219.54" width="1.3" height="1.1" fill="#6a6a6a"/><rect x="335" y="229.01" width="6" height="1.1" fill="#6a6a6a"/><rect x="337.4" y="238.38" width="1.3" height="1.1" fill="#6a6a6a"/><rect x="335" y="247.84" width="6" height="1.1" fill="#6a6a6a"/><rect x="337.4" y="257.20" width="1.3" height="1.1" fill="#6a6a6a"/><rect x="335" y="266.67" width="6" height="1.1" fill="#6a6a6a"/><rect x="337.4" y="276.03" width="1.3" height="1.1" fill="#6a6a6a"/><rect x="335" y="285.50" width="6" height="1.1" fill="#6a6a6a"/><rect x="337.4" y="294.87" width="1.3" height="1.1" fill="#6a6a6a"/><rect x="335" y="304.33" width="6" height="1.1" fill="#6a6a6a"/><rect x="337.4" y="313.69" width="1.3" height="1.1" fill="#6a6a6a"/><text x="0" y="0" transform="translate(341.3 323.66) rotate(-90)" font-size="10.2" fill="#505050" text-anchor="middle" font-family="Liberation Sans">1</text><rect x="337.4" y="332.52" width="1.3" height="1.1" fill="#6a6a6a"/><rect x="335" y="341.99" width="6" height="1.1" fill="#6a6a6a"/><rect x="337.4" y="351.35" width="1.3" height="1.1" fill="#6a6a6a"/><text x="0" y="0" transform="translate(341.3 361.32) rotate(-90)" font-size="10.2" fill="#505050" text-anchor="middle" font-family="Liberation Sans">2</text><rect x="337.4" y="370.19" width="1.3" height="1.1" fill="#6a6a6a"/><rect x="335" y="379.65" width="6" height="1.1" fill="#6a6a6a"/><rect x="337.4" y="389.01" width="1.3" height="1.1" fill="#6a6a6a"/><text x="0" y="0" transform="translate(341.3 398.98) rotate(-90)" font-size="10.2" fill="#505050" text-anchor="middle" font-family="Liberation Sans">3</text><rect x="337.4" y="407.84" width="1.3" height="1.1" fill="#6a6a6a"/><rect x="335" y="417.31" width="6" height="1.1" fill="#6a6a6a"/><rect x="337.4" y="426.68" width="1.3" height="1.1" fill="#6a6a6a"/><text x="0" y="0" transform="translate(341.3 436.64) rotate(-90)" font-size="10.2" fill="#505050" text-anchor="middle" font-family="Liberation Sans">4</text><rect x="337.4" y="445.50" width="1.3" height="1.1" fill="#6a6a6a"/><rect x="335" y="454.97" width="6" height="1.1" fill="#6a6a6a"/><rect x="337.4" y="464.33" width="1.3" height="1.1" fill="#6a6a6a"/><text x="0" y="0" transform="translate(341.3 474.30) rotate(-90)" font-size="10.2" fill="#505050" text-anchor="middle" font-family="Liberation Sans">5</text><rect x="337.4" y="483.16" width="1.3" height="1.1" fill="#6a6a6a"/><rect x="335" y="492.63" width="6" height="1.1" fill="#6a6a6a"/><rect x="337.4" y="501.99" width="1.3" height="1.1" fill="#6a6a6a"/><text x="0" y="0" transform="translate(341.3 511.96) rotate(-90)" font-size="10.2" fill="#505050" text-anchor="middle" font-family="Liberation Sans">6</text><rect x="337.4" y="520.83" width="1.3" height="1.1" fill="#6a6a6a"/><rect x="335" y="530.29" width="6" height="1.1" fill="#6a6a6a"/><rect x="337.4" y="539.65" width="1.3" height="1.1" fill="#6a6a6a"/><text x="0" y="0" transform="translate(341.3 549.62) rotate(-90)" font-size="10.2" fill="#505050" text-anchor="middle" font-family="Liberation Sans">7</text><rect x="337.4" y="558.49" width="1.3" height="1.1" fill="#6a6a6a"/><rect x="335" y="567.95" width="6" height="1.1" fill="#6a6a6a"/><rect x="337.4" y="577.32" width="1.3" height="1.1" fill="#6a6a6a"/><text x="0" y="0" transform="translate(341.3 587.28) rotate(-90)" font-size="10.2" fill="#505050" text-anchor="middle" font-family="Liberation Sans">8</text><rect x="337.4" y="596.14" width="1.3" height="1.1" fill="#6a6a6a"/><rect x="335" y="605.61" width="6" height="1.1" fill="#6a6a6a"/><rect x="337.4" y="614.98" width="1.3" height="1.1" fill="#6a6a6a"/><text x="0" y="0" transform="translate(341.3 624.94) rotate(-90)" font-size="10.2" fill="#505050" text-anchor="middle" font-family="Liberation Sans">9</text><rect x="337.4" y="633.81" width="1.3" height="1.1" fill="#6a6a6a"/><rect x="335" y="643.27" width="6" height="1.1" fill="#6a6a6a"/><rect x="337.4" y="652.63" width="1.3" height="1.1" fill="#6a6a6a"/></svg>
<div class="a" style="left:410.5px;top:201px;width:790.5px;height:455px;background:#fff"></div>
<div class="a" style="left:1201px;top:201px;width:1px;height:455px;background:#d4d4d4"></div>
<div class="a" style="left:410px;top:201px;width:1px;height:455px;background:#d4d4d4"></div>
<div class="a" style="left:1262.5px;top:201px;width:17.5px;height:455px;background:#f5f5f5"></div>
<svg style="left:1266px;top:205px" width="11" height="9"><path d="M1 8 L5.5 1.5 L10 8 Z" fill="#707070" stroke="#707070" stroke-width="1" stroke-linejoin="round"/></svg>
<div class="a" style="left:1267px;top:228px;width:8.4px;height:166px;border-radius:4.2px;background:#727272"></div>
<svg style="left:1266px;top:643px" width="11" height="9"><path d="M1 1 L5.5 7.5 L10 1 Z" fill="#707070" stroke="#707070" stroke-width="1" stroke-linejoin="round"/></svg>
<div class="a" style="left:920.6px;top:447.7px;width:132px;height:17px;background:#dedede;border:1px solid #c9c9c9"></div>
<div class="a" style="left:920.6px;top:464.6px;width:130px;height:31px;background:#fff;border:1px solid #c9c9c9;border-top:none"></div>
<div class="a" style="left:922.8px;top:464.6px;width:124px;height:17.6px;background:#c8c8c8"></div>
<svg style="left:923px;top:450px" width="6" height="14"><rect x="1.5" y="0.8" width="2.2" height="2.2" fill="#707070"/><rect x="1.5" y="5.3" width="2.2" height="2.2" fill="#707070"/><rect x="1.5" y="9.8" width="2.2" height="2.2" fill="#707070"/></svg>
<div class="a" style="left:988.6px;top:465px;width:1.2px;height:17px;background:#606060"></div>
<svg style="left:0;top:0" width="1280" height="678"><path d="M776 461.5 L777.5 460.5 L779.0 461.8 L780.5 460.5 L782.0 461.8 L783.5 460.5 L785.0 461.8 L786.5 460.5 L788.0 461.8 L789.5 460.5 L791.0 461.8 L792.5 460.5 L794.0 461.8 L795.5 460.5 L797.0 461.8 L798.5 460.5 L800.0 461.8 L801.5 460.5 L803.0 461.8 L804.5 460.5 L806.0 461.8 L807.5 460.5 L809.0 461.8 L810.5 460.5 L812.0 461.8" stroke="#e03030" stroke-width="1" fill="none"/></svg>
<svg style="left:0;top:0" width="1280" height="678"><path d="M771 480.5 L772.5 479.5 L774.0 480.8 L775.5 479.5 L777.0 480.8 L778.5 479.5 L780.0 480.8 L781.5 479.5 L783.0 480.8 L784.5 479.5 L786.0 480.8 L787.5 479.5 L789.0 480.8 L790.5 479.5 L792.0 480.8 L793.5 479.5 L795.0 480.8 L796.5 479.5 L798.0 480.8 L799.5 479.5 L801.0 480.8 L802.5 479.5 L804.0 480.8 L805.5 479.5 L807.0 480.8 L808.5 479.5 L810.0 480.8 L811.5 479.5 L813.0 480.8 L814.5 479.5 L816.0 480.8 L817.5 479.5 L819.0 480.8 L820.5 479.5 L822.0 480.8 L823.5 479.5 L825.0 480.8" stroke="#e03030" stroke-width="1" fill="none"/></svg>
<svg style="left:519px;top:541px" width="12" height="18" fill="none" stroke="#111" stroke-width="1.2"><path d="M6.3 2 V16.5 M1.8 1.1 H4.8 Q6.3 1.1 6.3 2.3 Q6.3 1.1 7.8 1.1 H10.8 M1.8 16.7 H4.8 Q6.3 16.7 6.3 15.5 Q6.3 16.7 7.8 16.7 H10.8"/></svg>
<div class="a" style="left:3px;top:655.5px;width:1277px;height:1px;background:#d2d2d2"></div>
<div class="a" style="left:4px;top:656.5px;width:1276px;height:22px;background:#f3f3f3"></div>
<svg style="left:162px;top:660px" width="17" height="16" fill="none" stroke="#424242" stroke-width="1.1"><path d="M7 12.5 H1.5 V1.5 H5.5 L7 3 L8.5 1.5 H12.5 V7"/><path d="M7 3 V9"/><path d="M9.5 10 L14.5 15 M14.5 10 L9.5 15"/></svg>
<svg style="left:453px;top:659px" width="17" height="17" fill="none" stroke="#424242" stroke-width="1.1"><circle cx="7" cy="2.5" r="1.6"/><path d="M1.5 4.5 Q7 6.5 12.5 4.5 M4.5 5.8 V9 L3 14.5 M9.5 5.8 V8.5"/><path d="M8 12 L10 14.5 L15 8.5"/></svg>
<svg style="left:928px;top:659px" width="17" height="17" fill="none" stroke="#424242" stroke-width="1.1"><path d="M1 4.5 V1 H4.5 M12 1 H15.5 V4.5 M15.5 12 V15.5 H12 M4.5 15.5 H1 V12"/><path d="M5 3.5 H9 L11.5 6 V13 H5 Z M9 3.5 V6 H11.5"/></svg>
<svg style="left:996px;top:660px" width="15" height="14" fill="none" stroke="#424242" stroke-width="1.1"><path d="M1 1.5 H6 Q7.2 1.5 7.2 2.8 V12.5 Q6.5 12 5.5 12 H1 Z M13.5 1.5 H8.4 Q7.2 1.5 7.2 2.8 V12.5 Q7.9 12 8.9 12 H13.5 Z"/><path d="M2.5 4.5 H5.5 M2.5 7 H5.5 M2.5 9.5 H5.5 M9 4.5 H12 M9 7 H12 M9 9.5 H12" stroke-width="0.8"/></svg>
<div class="a" style="left:1024px;top:656.5px;width:40px;height:22px;background:#dadada"></div>
<svg style="left:1037px;top:659px" width="13" height="16" fill="none" stroke="#424242" stroke-width="1.1"><rect x="1" y="1" width="10.5" height="13.5"/><path d="M3 4 H9.5 M3 6.3 H9.5 M3 8.6 H9.5 M3 10.9 H9.5" stroke-width="0.8"/></svg>
<svg style="left:1075px;top:659px" width="18" height="17" fill="none" stroke="#424242" stroke-width="1.1"><path d="M8 13.5 H1.5 V1 H12.5 V7"/><path d="M3.5 3.5 H10.5 M3.5 5.8 H10.5 M3.5 8.1 H7" stroke-width="0.8"/><circle cx="12" cy="12" r="4.5" fill="#424242" stroke="none"/><path d="M7.5 12 H16.5 M12 7.5 Q9.8 12 12 16.5 Q14.2 12 12 7.5" stroke="#f0f0f0" stroke-width="0.8"/></svg>
<div class="a" style="left:1109px;top:666.5px;width:7px;height:1.1px;background:#606060"></div>
<div class="a" style="left:1122.5px;top:666.5px;width:98px;height:1.2px;background:#606060"></div>
<div class="a" style="left:1168.9px;top:660px;width:5.6px;height:14px;background:#606060;border-radius:1px"></div>
<div class="a" style="left:1226px;top:666.5px;width:7.5px;height:1.1px;background:#606060"></div>
<div class="a" style="left:1229.2px;top:663px;width:1.1px;height:8px;background:#606060"></div>
<span class="t" style="left:49.45px;top:18.99px;font-size:11px;color:#fff;transform:scaleX(0.9463);transform-origin:0 0">Automatisches Speichern</span>
<span class="t" style="left:358.38px;top:18.72px;font-size:12.5px;color:#fff;transform:scaleX(0.9674);transform-origin:0 0">Document 1</span>
<span class="t" style="left:451.77px;top:18.72px;font-size:12.5px;color:#fff;transform:scaleX(0.9287);transform-origin:0 0">Keine Bezeichnung • Gespeichert</span>
<span class="t" style="left:737.85px;top:18.40px;font-size:13px;color:#2a5596;transform:scaleX(0.9581);transform-origin:0 0">Suchen</span>
<span class="t" style="left:18.82px;top:57.07px;font-size:13.5px;color:#303030;transform:scaleX(0.9862);transform-origin:0 0">Datei</span>
<span class="t" style="left:116.83px;top:57.07px;font-size:13.5px;color:#303030;transform:scaleX(0.9625);transform-origin:0 0">Einfügen</span>
<span class="t" style="left:188.32px;top:57.07px;font-size:13.5px;color:#303030;transform:scaleX(0.9595);transform-origin:0 0">Zeichnen</span>
<span class="t" style="left:262.32px;top:57.07px;font-size:13.5px;color:#303030;transform:scaleX(0.9903);transform-origin:0 0">Entwurf</span>
<span class="t" style="left:326.07px;top:57.07px;font-size:13.5px;color:#303030;transform:scaleX(0.9886);transform-origin:0 0">Layout</span>
<span class="t" style="left:385.32px;top:57.07px;font-size:13.5px;color:#303030;transform:scaleX(0.9277);transform-origin:0 0">Referenzen</span>
<span class="t" style="left:471.82px;top:57.07px;font-size:13.5px;color:#303030;transform:scaleX(0.9597);transform-origin:0 0">Sendungen</span>
<span class="t" style="left:558.83px;top:57.07px;font-size:13.5px;color:#303030;transform:scaleX(0.9970);transform-origin:0 0">Überprüfen</span>
<span class="t" style="left:646.08px;top:57.07px;font-size:13.5px;color:#303030;transform:scaleX(0.9783);transform-origin:0 0">Ansicht</span>
<span class="t" style="left:708.33px;top:57.07px;font-size:13.5px;color:#303030;transform:scaleX(1.0130);transform-origin:0 0">Hilfe</span>
<span class="t" style="left:754.33px;top:57.07px;font-size:13.5px;color:#303030;transform:scaleX(0.9872);transform-origin:0 0">Citavi</span>
<span class="t" style="left:805.33px;top:57.07px;font-size:13.5px;color:#303030;transform:scaleX(0.9921);transform-origin:0 0">Docusign</span>
<span class="t" style="left:69.33px;top:57.07px;font-size:13.5px;color:#242424;transform:scaleX(1.0123);transform-origin:0 0;-webkit-text-stroke:0.25px #242424">Start</span>
<span class="t" style="left:964.85px;top:57.00px;font-size:13px;color:#303030;transform:scaleX(1.0257);transform-origin:0 0">Kommentare</span>
<span class="t" style="left:1078.85px;top:57.00px;font-size:13px;color:#303030;transform:scaleX(1.0062);transform-origin:0 0">Bearbeitung</span>
<span class="t" style="left:1193.83px;top:56.87px;font-size:13.5px;color:#fff;transform:scaleX(0.9630);transform-origin:0 0;-webkit-text-stroke:0.25px #fff">Freigeben</span>
<span class="t" style="left:26.39px;top:122.07px;font-size:12.2px;color:#303030;transform:scaleX(0.9594);transform-origin:0 0">Einfügen</span>
<span class="t" style="left:16.84px;top:162.12px;font-size:11.2px;color:#424242;transform:scaleX(0.9205);transform-origin:0 0">Zwischenablage</span>
<span class="t" style="left:120.28px;top:88.10px;font-size:12.4px;color:#242424;transform:scaleX(0.9751);transform-origin:0 0">Aptos (Textkörper)</span>
<span class="t" style="left:295.88px;top:88.10px;font-size:12.4px;color:#242424">11</span>
<span class="t" style="left:126.37px;top:112.93px;font-size:12.6px;color:#242424;font-weight:bold">F</span>
<span class="t" style="left:151.00px;top:113.14px;font-size:12px;color:#505050;font-style:italic">K</span>
<span class="t" style="left:176.90px;top:113.14px;font-size:12px;color:#505050;transform:scaleX(1.1376);transform-origin:0 0">U</span>
<span class="t" style="left:214.40px;top:113.14px;font-size:12px;color:#606060">ab</span>
<span class="t" style="left:244.05px;top:112.30px;font-size:13px;color:#242424;transform:scaleX(1.3462);transform-origin:0 0">x</span>
<span class="t" style="left:251.60px;top:121.23px;font-size:8px;color:#1e88e5;font-weight:bold">2</span>
<span class="t" style="left:270.35px;top:112.30px;font-size:13px;color:#242424;transform:scaleX(1.3462);transform-origin:0 0">x</span>
<span class="t" style="left:277.60px;top:110.23px;font-size:8px;color:#1e88e5;font-weight:bold">2</span>
<span class="t" style="left:244.85px;top:138.80px;font-size:13px;color:#424242">A</span>
<span class="t" style="left:254.93px;top:140.07px;font-size:11.5px;color:#424242">a</span>
<span class="t" style="left:197.24px;top:162.12px;font-size:11.2px;color:#424242;transform:scaleX(0.9669);transform-origin:0 0">Schriftart</span>
<span class="t" style="left:415.44px;top:162.12px;font-size:11.2px;color:#424242;transform:scaleX(0.9144);transform-origin:0 0">Absatz</span>
<span class="t" style="left:544.99px;top:121.17px;font-size:12.2px;color:#303030;transform:scaleX(0.9936);transform-origin:0 0">Formatvorlagen</span>
<span class="t" style="left:541.44px;top:162.12px;font-size:11.2px;color:#424242;transform:scaleX(0.9451);transform-origin:0 0">Formatvorlagen</span>
<span class="t" style="left:647.69px;top:119.17px;font-size:12.2px;color:#303030;transform:scaleX(0.9423);transform-origin:0 0">Bearbeiten</span>
<span class="t" style="left:721.89px;top:122.17px;font-size:12.2px;color:#303030;transform:scaleX(0.9771);transform-origin:0 0">Diktieren</span>
<span class="t" style="left:726.34px;top:162.12px;font-size:11.2px;color:#424242;transform:scaleX(0.9149);transform-origin:0 0">Sprache</span>
<span class="t" style="left:788.79px;top:121.17px;font-size:12.2px;color:#303030;transform:scaleX(0.9638);transform-origin:0 0">Vertraulichkeit</span>
<span class="t" style="left:792.24px;top:162.12px;font-size:11.2px;color:#424242;transform:scaleX(0.9560);transform-origin:0 0">Vertraulichkeit</span>
<span class="t" style="left:885.79px;top:121.17px;font-size:12.2px;color:#303030;transform:scaleX(0.9862);transform-origin:0 0">Editor</span>
<span class="t" style="left:887.44px;top:162.12px;font-size:11.2px;color:#424242;transform:scaleX(0.9248);transform-origin:0 0">Editor</span>
<span class="t" style="left:944.39px;top:121.17px;font-size:12.2px;color:#303030;transform:scaleX(1.0885);transform-origin:0 0">Add-</span>
<span class="t" style="left:950.79px;top:137.07px;font-size:12.2px;color:#303030;transform:scaleX(0.9571);transform-origin:0 0">Ins</span>
<span class="t" style="left:939.94px;top:162.12px;font-size:11.2px;color:#424242;transform:scaleX(0.9348);transform-origin:0 0">Add-Ins</span>
<span class="t" style="left:996.89px;top:121.17px;font-size:12.2px;color:#303030;transform:scaleX(0.9928);transform-origin:0 0">Send to</span>
<span class="t" style="left:1001.89px;top:137.07px;font-size:12.2px;color:#303030;transform:scaleX(0.9975);transform-origin:0 0">NVivo</span>
<span class="t" style="left:1003.19px;top:162.12px;font-size:11.2px;color:#424242;transform:scaleX(0.9817);transform-origin:0 0">NVivo</span>
<span class="t" style="left:14.28px;top:191.13px;font-size:14.5px;color:#242424;transform:scaleX(1.0513);transform-origin:0 0;-webkit-text-stroke:0.3px #242424">Citavi</span>
<span class="t" style="left:12.68px;top:215.70px;font-size:12.4px;color:#242424;transform:scaleX(0.9822);transform-origin:0 0">Ansicht</span>
<span class="t" style="left:28.28px;top:240.90px;font-size:12.4px;color:#8a8a8a;transform:scaleX(0.9417);transform-origin:0 0">Einfügen</span>
<span class="t" style="left:99.98px;top:240.90px;font-size:12.4px;color:#8a8a8a;transform:scaleX(0.9950);transform-origin:0 0">Mit Optionen einfügen</span>
<span class="t" style="left:13.98px;top:266.50px;font-size:12.4px;color:#242424;transform:scaleX(0.9349);transform-origin:0 0">Titel</span>
<span class="t" style="left:61.38px;top:266.50px;font-size:12.4px;color:#242424;transform:scaleX(0.9293);transform-origin:0 0">Wissen</span>
<span class="t" style="left:109.38px;top:266.50px;font-size:12.4px;color:#242424;transform:scaleX(0.9386);transform-origin:0 0">Kapitel</span>
<span class="t" style="left:157.18px;top:264.70px;font-size:12.4px;color:#242424;transform:scaleX(0.9214);transform-origin:0 0">Nachweise</span>
<span class="t" style="left:37.58px;top:290.70px;font-size:12.4px;color:#242424;transform:scaleX(0.9213);transform-origin:0 0">Fassam, Dani, and Hills</span>
<span class="t" style="left:37.38px;top:309.80px;font-size:12.4px;color:#fff;transform:scaleX(0.9604);transform-origin:0 0">(2015, pp. 665–666)</span>
<span class="t" style="left:45.10px;top:531.54px;font-size:12px;color:#242424;transform:scaleX(0.9439);transform-origin:0 0">Nur Jahr</span>
<span class="t" style="left:45.10px;top:555.34px;font-size:12px;color:#242424;transform:scaleX(0.9563);transform-origin:0 0">Nur Person</span>
<span class="t" style="left:45.10px;top:580.44px;font-size:12px;color:#242424;transform:scaleX(0.9507);transform-origin:0 0">Keine Klammern</span>
<span class="t" style="left:26.60px;top:614.24px;font-size:12px;color:#5f5f5f;transform:scaleX(0.9807);transform-origin:0 0">Seiten von–bis:</span>
<span class="t" style="left:144.39px;top:613.67px;font-size:12.2px;color:#242424;transform:scaleX(0.9798);transform-origin:0 0">665–666</span>
<span class="t" style="left:12.80px;top:636.14px;font-size:12px;color:#2270d0;transform:scaleX(0.9819);transform-origin:0 0">Titel bisher 1 mal zitiert.</span>
<span class="t" style="left:9.00px;top:553.85px;font-size:14px;color:#fff">a</span>
<span class="t" style="left:118.20px;top:612.95px;font-size:14px;color:#fff">b</span>
<span class="t" style="left:506.10px;top:299.77px;font-size:20px;color:#0f4761;transform:scaleX(0.9882);transform-origin:0 0;-webkit-text-stroke:0.15px #0f4761">1 Introduction</span>
<span class="t" style="left:506.10px;top:338.07px;font-size:20px;color:#0f4761;transform:scaleX(0.9605);transform-origin:0 0;-webkit-text-stroke:0.15px #0f4761">2 Definitions and background</span>
<span class="t" style="left:506.03px;top:370.66px;font-size:13.4px;color:#222222;transform:scaleX(1.0528);transform-origin:0 0;-webkit-text-stroke:0.2px #222">Finally, there is a further challenge in this area with confusion over terminology - as highlighted</span>
<span class="t" style="left:506.03px;top:389.96px;font-size:13.4px;color:#222222;transform:scaleX(1.0421);transform-origin:0 0;-webkit-text-stroke:0.2px #222">by the Elliot report (Elliott, 2013) - where US led systems prefer the use of ‘fraud’ and European</span>
<span class="t" style="left:506.03px;top:409.06px;font-size:13.4px;color:#222222;transform:scaleX(1.0571);transform-origin:0 0;-webkit-text-stroke:0.2px #222">based research adopts ‘crime’, which creates another divergence of topics within the research.</span>
<span class="t" style="left:506.03px;top:428.16px;font-size:13.4px;color:#222222;transform:scaleX(1.0522);transform-origin:0 0;-webkit-text-stroke:0.2px #222">The divergence of terminology use is creating confusion in the system and the authors support</span>
<span class="t" style="left:929.37px;top:451.03px;font-size:10.6px;color:#606060;transform:scaleX(0.9700);transform-origin:0 0">To edit, see citavi.com/edit</span>
<span class="t" style="left:506.03px;top:447.46px;font-size:13.4px;color:#222222;transform:scaleX(1.0640);transform-origin:0 0;-webkit-text-stroke:0.2px #222">the need for academia and practitioners to utilise the term ‘food cr</span>
<span class="t" style="left:1052.03px;top:447.46px;font-size:13.4px;color:#222222;transform:scaleX(1.0760);transform-origin:0 0;-webkit-text-stroke:0.2px #222">and</span>
<span class="t" style="left:506.03px;top:466.56px;font-size:13.4px;color:#222222;transform:scaleX(1.0494);transform-origin:0 0;-webkit-text-stroke:0.2px #222">strengthen a coherent body of knowledge. Fassam, Dani, and Hills</span>
<span class="t" style="left:922.83px;top:466.56px;font-size:13.4px;color:#222222;transform:scaleX(1.0270);transform-origin:0 0;-webkit-text-stroke:0.2px #222">(2015, pp. 665–666)</span>
<span class="t" style="left:13.93px;top:662.75px;font-size:11.4px;color:#424242;transform:scaleX(0.9058);transform-origin:0 0">Seite 1 von 1</span>
<span class="t" style="left:92.43px;top:662.75px;font-size:11.4px;color:#424242;transform:scaleX(0.9420);transform-origin:0 0">156 Wörter</span>
<span class="t" style="left:193.93px;top:662.75px;font-size:11.4px;color:#424242;transform:scaleX(0.8987);transform-origin:0 0">Englisch (Vereinigte Staaten)</span>
<span class="t" style="left:341.43px;top:662.75px;font-size:11.4px;color:#424242;transform:scaleX(0.8890);transform-origin:0 0">Textvorhersagen: ein</span>
<span class="t" style="left:471.93px;top:662.75px;font-size:11.4px;color:#424242;transform:scaleX(0.9041);transform-origin:0 0">Barrierefreiheit: Keine Probleme</span>
<span class="t" style="left:946.13px;top:662.75px;font-size:11.4px;color:#424242;transform:scaleX(0.8765);transform-origin:0 0">Fokus</span>
<span class="t" style="left:1245.63px;top:662.75px;font-size:11.4px;color:#424242;transform:scaleX(0.9214);transform-origin:0 0">100%</span>
</body></html>
